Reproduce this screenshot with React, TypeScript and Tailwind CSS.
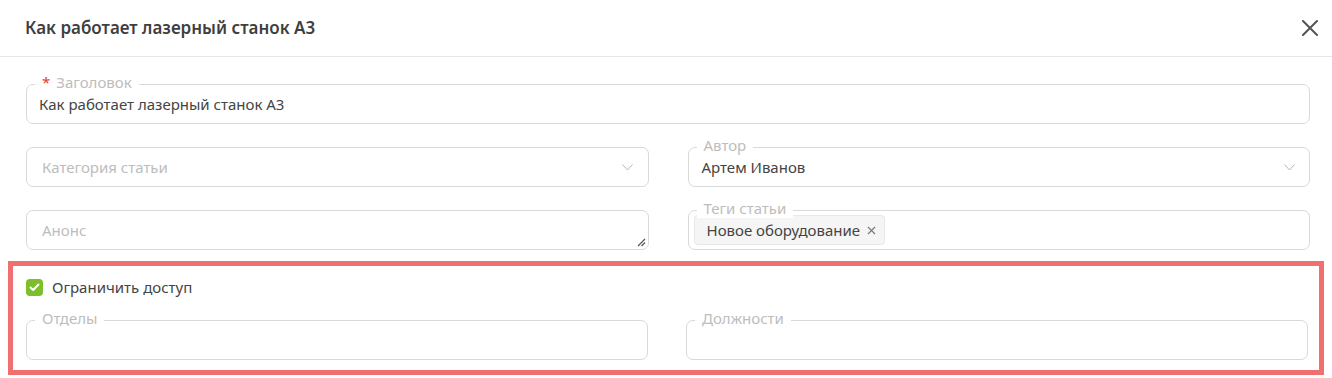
import React from 'react';

function Chevron() {
  return (
    <svg width="11" height="7" viewBox="0 0 11 7" className="shrink-0">
      <polyline points="0.5,0.5 5.5,6 10.5,0.5" fill="none" stroke="#b5b5b5" strokeWidth="1" />
    </svg>
  );
}

function Field({
  label,
  required,
  children,
  className = '',
}: {
  label?: string;
  required?: boolean;
  children?: React.ReactNode;
  className?: string;
}) {
  return (
    <div className={`relative h-[40px] rounded-[7px] border border-[#d9d9d9] bg-white flex items-center ${className}`}>
      {label && (
        <span className="absolute left-[8px] -top-[13px] bg-white px-[7px] text-[15px] leading-[20px] text-[#bdbdbd] flex items-center">
          {required && <span className="text-[#e53935] mr-[6px] text-[15px]">*</span>}
          {label}
        </span>
      )}
      {children}
    </div>
  );
}

export default function App() {
  return (
    <div className="w-[1332px] h-[378px] bg-white overflow-hidden font-['Noto_Sans',sans-serif]">
      {/* Header */}
      <header className="h-[57px] border-b border-[#e6e6e6] flex items-center justify-between pl-[25px] pr-[14px]">
        <h1 className="text-[17px] font-semibold text-[#3f3f3f]">Как работает лазерный станок А3</h1>
        <svg width="16" height="16" viewBox="0 0 16 16">
          <path d="M1 1 L15 15 M15 1 L1 15" stroke="#555" strokeWidth="2" strokeLinecap="round" />
        </svg>
      </header>

      <div className="pl-[26px] pr-[22px] pt-[27px]">
        {/* Title */}
        <Field label="Заголовок" required>
          <span className="pl-[12px] text-[15px] text-[#444]">Как работает лазерный станок А3</span>
        </Field>

        <div className="grid grid-cols-2 gap-x-[39px] gap-y-[23px] mt-[23px]">
          <Field className="justify-between pl-[15px] pr-[15px]">
            <span className="text-[15px] text-[#bdbdbd]">Категория статьи</span>
            <Chevron />
          </Field>
          <Field label="Автор" className="justify-between pl-[13px] pr-[14px]">
            <span className="text-[15px] text-[#444]">Артем Иванов</span>
            <Chevron />
          </Field>
          <Field className="pl-[15px]">
            <span className="text-[15px] text-[#bdbdbd]">Анонс</span>
            <svg width="9" height="9" viewBox="0 0 9 9" className="absolute right-[2px] bottom-[2px]">
              <path d="M1 8 L8 1 M4.5 8 L8 4.5" stroke="#555" strokeWidth="1.2" />
            </svg>
          </Field>
          <Field label="Теги статьи" className="pl-[5px]">
            <span className="h-[30px] flex items-center gap-[7px] rounded-[4px] border border-[#e8e8e8] bg-[#f5f5f5] pl-[12px] pr-[8px] text-[15px] text-[#444]">
              Новое оборудование
              <svg width="9" height="9" viewBox="0 0 9 9">
                <path d="M1 1 L8 8 M8 1 L1 8" stroke="#777" strokeWidth="1.1" />
              </svg>
            </span>
          </Field>
        </div>

        {/* Highlighted access block */}
        <div className="mt-[11px] -ml-[18px] -mr-[14px] border-[5px] border-[#f07070] pl-[13px] pr-[11px] pt-[13px] pb-[10px]">
          <div className="flex items-center gap-[9px] h-[17px]">
            <span className="w-[17px] h-[17px] rounded-[4px] bg-[#7bbf2a] flex items-center justify-center">
              <svg width="11" height="9" viewBox="0 0 11 9">
                <polyline points="1.5,4.5 4.2,7 9.5,1.5" fill="none" stroke="#fff" strokeWidth="2" strokeLinecap="round" strokeLinejoin="round" />
              </svg>
            </span>
            <span className="text-[15px] text-[#444]">Ограничить доступ</span>
          </div>
          <div className="grid grid-cols-2 gap-x-[38px] mt-[24px]">
            <Field label="Отделы" />
            <Field label="Должности" />
          </div>
        </div>
      </div>
    </div>
  );
}
